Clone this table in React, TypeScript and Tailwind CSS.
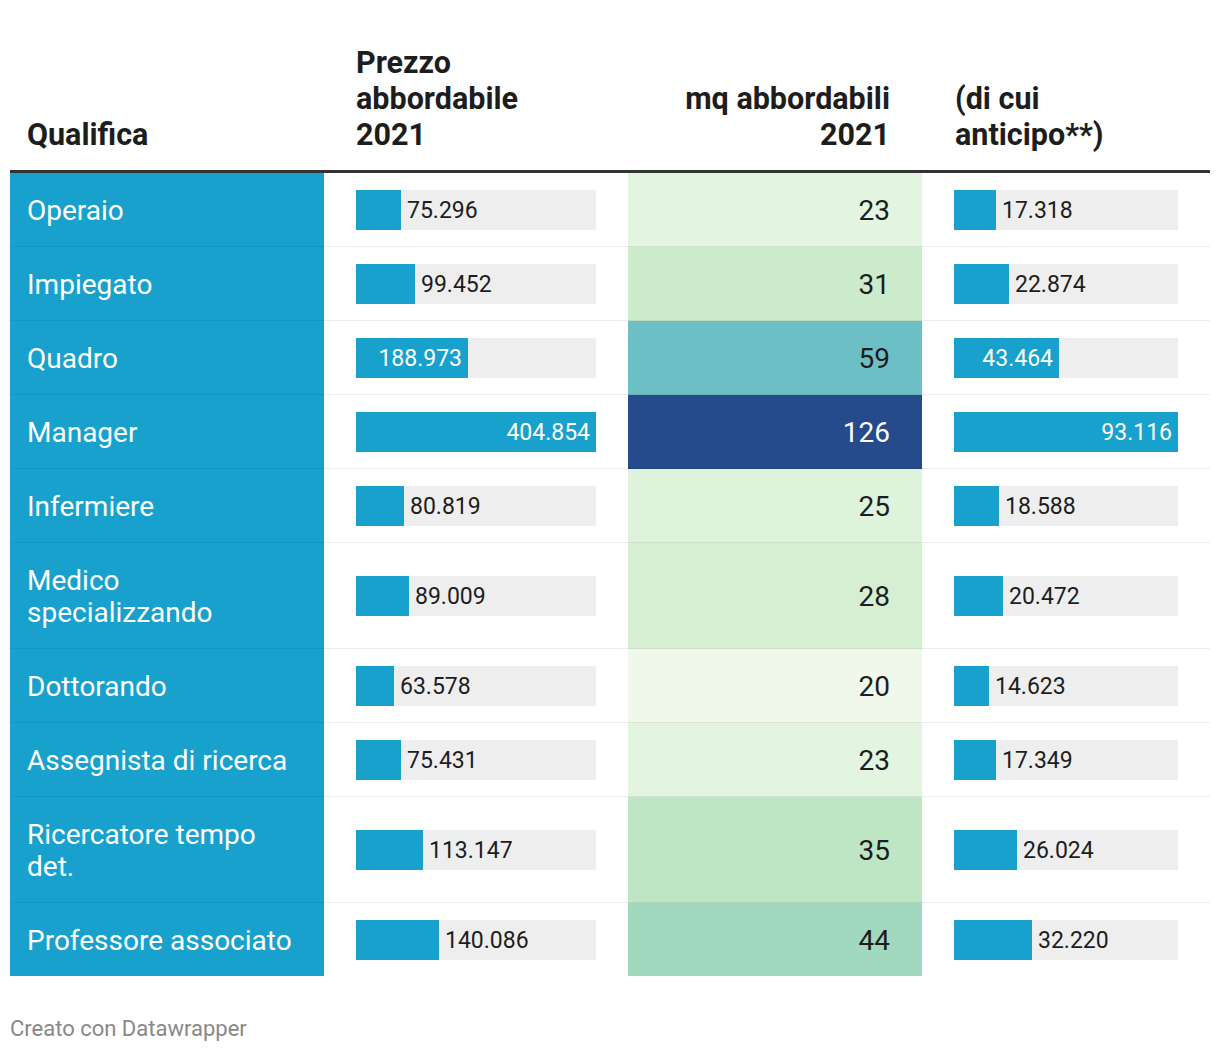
const rows = [
  { name: ["Operaio"], prezzo: 75296, mq: 23, mqBg: "bg-[#e3f4e0]", anticipo: 17318 },
  { name: ["Impiegato"], prezzo: 99452, mq: 31, mqBg: "bg-[#cbebcb]", anticipo: 22874 },
  { name: ["Quadro"], prezzo: 188973, mq: 59, mqBg: "bg-[#6dbfc6]", anticipo: 43464 },
  { name: ["Manager"], prezzo: 404854, mq: 126, mqBg: "bg-[#254b8c]", anticipo: 93116, dark: true },
  { name: ["Infermiere"], prezzo: 80819, mq: 25, mqBg: "bg-[#dff2dc]", anticipo: 18588 },
  { name: ["Medico", "specializzando"], prezzo: 89009, mq: 28, mqBg: "bg-[#d6efd2]", anticipo: 20472 },
  { name: ["Dottorando"], prezzo: 63578, mq: 20, mqBg: "bg-[#eff8eb]", anticipo: 14623 },
  { name: ["Assegnista di ricerca"], prezzo: 75431, mq: 23, mqBg: "bg-[#e3f4e0]", anticipo: 17349 },
  { name: ["Ricercatore tempo", "det."], prezzo: 113147, mq: 35, mqBg: "bg-[#bfe6c4]", anticipo: 26024 },
  { name: ["Professore associato"], prezzo: 140086, mq: 44, mqBg: "bg-[#a1d9bf]", anticipo: 32220 },
]

const fmt = (n: number) => n.toLocaleString("de-DE")

function Bar({ value, max, width }: { value: number; max: number; width: number }) {
  const w = Math.round((value / max) * width)
  const inside = w >= 100
  return (
    <div className="flex h-[40px] w-full items-center bg-[#eeeeee] pt-[1px] text-[23px] leading-none">
      <div
        className="-mt-[1px] flex h-[40px] items-center justify-end bg-[#18a1cd] pr-[6px] pt-[1px] text-white"
        style={{ width: w }}
      >
        {inside && fmt(value)}
      </div>
      {!inside && <span className="pl-[6px] text-[#1d1d1d]">{fmt(value)}</span>}
    </div>
  )
}

export default function App() {
  return (
    <div className="min-h-[1052px] w-[1220px] bg-white px-[10px] pt-[45px] font-['Roboto',sans-serif] text-[#1d1d1d]">
      <div className="grid grid-cols-[314px_304px_294px_288px] border-b-[3px] border-[#333333] text-[30.5px] font-bold leading-[36px]">
        <div className="flex items-end pb-[17px] pl-[17px]">Qualifica</div>
        <div className="flex items-end pb-[17px] pl-[32px]">
          <div>
            Prezzo
            <br />
            abbordabile
            <br />
            2021
          </div>
        </div>
        <div className="flex items-end justify-end pb-[17px] pr-[32px] text-right">
          <div>
            mq abbordabili
            <br />
            2021
          </div>
        </div>
        <div className="flex items-end pb-[17px] pl-[33px]">
          <div>
            (di cui
            <br />
            anticipo**)
          </div>
        </div>
      </div>

      <div>
        {rows.map((r, i) => {
          const last = i === rows.length - 1
          const sep = last ? "" : "border-b border-black/[0.07]"
          return (
            <div key={i} className="grid grid-cols-[314px_304px_294px_288px] text-[28px] leading-[32px]">
              <div className={`bg-[#18a1cd] pb-[19px] pl-[17px] pt-[22px] text-white ${sep}`}>
                {r.name.map((l, j) => (
                  <div key={j}>{l}</div>
                ))}
              </div>
              <div className={`flex items-center px-[32px] ${sep}`}>
                <Bar value={r.prezzo} max={404854} width={240} />
              </div>
              <div
                className={`flex items-center justify-end pr-[32px] pt-[2px] ${r.mqBg} ${r.dark ? "text-white" : ""} ${sep}`}
              >
                {r.mq}
              </div>
              <div className={`flex items-center px-[32px] ${sep}`}>
                <Bar value={r.anticipo} max={93116} width={224} />
              </div>
            </div>
          )
        })}
      </div>

      <div className="pt-[40px] text-[22px] leading-[26px] text-[#888888]">Creato con Datawrapper</div>
    </div>
  )
}
